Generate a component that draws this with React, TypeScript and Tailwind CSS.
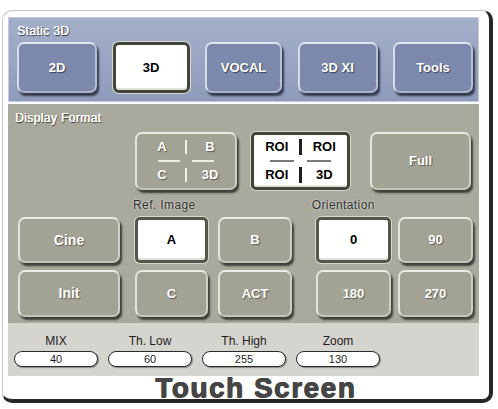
import React from "react";

const font = { fontFamily: '"Liberation Sans", Arial, sans-serif' };

const grayBtn =
  "flex items-center justify-center shrink-0 rounded-[7px] bg-[#a3a395] border-2 border-t-[#ecece4] border-l-[#e4e4dc] border-r-[#cfcfc5] border-b-[#c4c4ba] shadow-[2px_3px_2px_rgba(38,38,32,0.8)] text-white font-bold text-[13px] [text-shadow:1px_1px_1px_rgba(0,0,0,0.45)]";

const blueBtn =
  "flex items-center justify-center rounded-[7px] bg-[#7c89ac] border-2 border-t-[#dfe4ef] border-l-[#d6dcea] border-r-[#b9c1d6] border-b-[#aab3ca] shadow-[2px_3px_2px_rgba(30,34,50,0.8)] text-white font-bold text-[13px] [text-shadow:1px_1px_1px_rgba(0,0,0,0.5)]";

const whiteBtn =
  "flex items-center justify-center shrink-0 rounded-[5px] bg-white border-[3px] border-[#43453b] shadow-[0_0_0_1px_#d8d8d0,inset_0_-2px_0_#e2e2dc] text-black font-bold text-[13px]";

const label =
  "text-[12px] leading-[12px] tracking-[0.4px] text-white [text-shadow:0.4px_0_0_#fff,1px_1px_1px_rgba(0,0,0,0.75)]";

const darkLabel =
  "text-[12px] leading-[12px] tracking-[0.4px] text-[#2f2f2f] [text-shadow:0_0_2px_rgba(255,255,255,0.9)]";

function Quad({
  cells,
  dark,
}: {
  cells: [string, string, string, string];
  dark?: boolean;
}) {
  const vline = dark ? "w-[3px] h-[16px] bg-[#1e1e1e]" : "w-[2px] h-[14px] bg-[#f2f2ec]";
  const hline = dark ? "w-[24px] h-[2px] bg-[#7a7a7a]" : "w-[22px] h-[2px] bg-[#ecece4]";
  return (
    <div
      className={`grid ${
        dark ? "grid-cols-[1fr_3px_1fr] w-[92px]" : "grid-cols-[1fr_2px_1fr] w-[94px]"
      } grid-rows-[26px_2px_26px] h-[54px] items-center justify-items-center`}
    >
      <span>{cells[0]}</span>
      <div className={vline} />
      <span>{cells[1]}</span>
      <div className={`${hline} justify-self-end mr-[5px]`} />
      <div />
      <div className={`${hline} justify-self-start ml-[5px]`} />
      <span>{cells[2]}</span>
      <div className={vline} />
      <span>{cells[3]}</span>
    </div>
  );
}

function Field({ name, value }: { name: string; value: string }) {
  return (
    <div className="flex flex-col items-center w-[84px]">
      <div className="text-[12px] leading-[13px] text-[#1e1e1e] h-[13px]">{name}</div>
      <div className="mt-[3px] w-[84px] h-[16px] rounded-full bg-white border-[1.5px] border-[#2a2a2a] shadow-[1px_1px_1px_rgba(0,0,0,0.35)] flex items-center justify-center text-[11px] leading-[12px] text-[#1e1e1e]">
        {value}
      </div>
    </div>
  );
}

export default function App() {
  return (
    <div className="w-[498px] h-[409px] bg-white pt-[10px] pl-[2px]" style={font}>
      <div className="w-[491px] h-[393px] rounded-[10px] bg-white border-t border-l border-[#c4c4c4] border-r-[4px] border-b-[4px] border-r-[#282828] border-b-[#282828] pt-[6px] pl-[5px]">
        {/* Static 3D mode bar */}
        <div className="w-[471px] h-[85px] bg-gradient-to-b from-[#a4b0ca] to-[#8e9bba] border border-[#c3cbdd] pt-[7px] pl-[8px] pr-[5px]">
          <div className={label}>Static 3D</div>
          <div className="mt-[5px] flex justify-between h-[51px]">
            <div className={`${blueBtn} w-[80px]`}>2D</div>
            <div className={`${whiteBtn} w-[77px] rounded-[6px] shadow-[0_0_0_1px_#c6cde0]`}>3D</div>
            <div className={`${blueBtn} w-[77px]`}>VOCAL</div>
            <div className={`${blueBtn} w-[80px]`}>3D XI</div>
            <div className={`${blueBtn} w-[80px]`}>Tools</div>
          </div>
        </div>

        {/* Display format and image controls */}
        <div className="mt-[2px] w-[471px] h-[219px] bg-[#a9a99e] pt-[8px]">
          <div className={`${label} pl-[7px]`}>Display Format</div>

          <div className="mt-[8px] flex h-[58px] pl-[127px]">
            <div className={`${grayBtn} w-[102px] text-[12px]`}>
              <Quad cells={["A", "B", "C", "3D"]} />
            </div>
            <div className={`${whiteBtn} ml-[14px] w-[99px] text-[12px]`}>
              <Quad cells={["ROI", "ROI", "ROI", "3D"]} dark />
            </div>
            <div className={`${grayBtn} ml-[20px] w-[101px]`}>Full</div>
          </div>

          <div className="mt-[9px] flex h-[12px]">
            <div className={`${darkLabel} ml-[125px]`}>Ref. Image</div>
            <div className={`${darkLabel} ml-[116px]`}>Orientation</div>
          </div>

          <div className="mt-[6px] flex h-[46px] pl-[10px]">
            <div className={`${grayBtn} w-[102px] text-[14px]`}>Cine</div>
            <div className={`${whiteBtn} ml-[15px] w-[73px] border-2 border-[#55564c]`}>A</div>
            <div className={`${grayBtn} ml-[10px] w-[74px]`}>B</div>
            <div className={`${whiteBtn} ml-[24px] w-[75px] border-2 border-[#55564c]`}>0</div>
            <div className={`${grayBtn} ml-[7px] w-[75px]`}>90</div>
          </div>

          <div className="mt-[7px] flex h-[47px] pl-[10px]">
            <div className={`${grayBtn} w-[102px] text-[14px]`}>Init</div>
            <div className={`${grayBtn} ml-[15px] w-[73px]`}>C</div>
            <div className={`${grayBtn} ml-[10px] w-[74px]`}>ACT</div>
            <div className={`${grayBtn} ml-[24px] w-[75px]`}>180</div>
            <div className={`${grayBtn} ml-[7px] w-[75px]`}>270</div>
          </div>
        </div>

        {/* Parameter readouts */}
        <div className="w-[471px] h-[53px] bg-[#d6d4ce] pt-[12px] pl-[6px] flex gap-[10px]">
          <Field name="MIX" value="40" />
          <Field name="Th. Low" value="60" />
          <Field name="Th. High" value="255" />
          <Field name="Zoom" value="130" />
        </div>

        <div className="w-[471px] h-[23px] flex justify-center pl-[24px]">
          <div className="text-[28px] leading-[23px] font-bold tracking-[1.5px] text-[#454545] [text-shadow:0.8px_0_0_#454545,0_0.6px_0_#454545,1px_1px_1px_rgba(0,0,0,0.25)] whitespace-nowrap">
            Touch Screen
          </div>
        </div>
      </div>
    </div>
  );
}
